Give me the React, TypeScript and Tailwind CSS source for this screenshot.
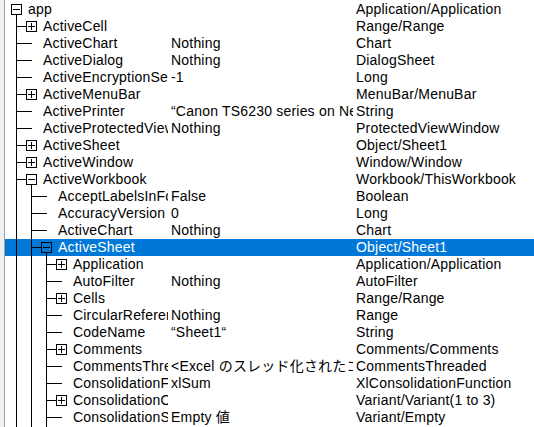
import React from "react";

type Row = {
  L: number;
  name: string;
  exp?: "+" | "-";
  val?: string;
  type: string;
  sel?: boolean;
};

const rows: Row[] = [
  { L: 0, name: "app", exp: "-", type: "Application/Application" },
  { L: 1, name: "ActiveCell", exp: "+", type: "Range/Range" },
  { L: 1, name: "ActiveChart", val: "Nothing", type: "Chart" },
  { L: 1, name: "ActiveDialog", val: "Nothing", type: "DialogSheet" },
  { L: 1, name: "ActiveEncryptionSession", val: "-1", type: "Long" },
  { L: 1, name: "ActiveMenuBar", exp: "+", type: "MenuBar/MenuBar" },
  { L: 1, name: "ActivePrinter", val: "“Canon TS6230 series on Ne01:“", type: "String" },
  { L: 1, name: "ActiveProtectedViewWindow", val: "Nothing", type: "ProtectedViewWindow" },
  { L: 1, name: "ActiveSheet", exp: "+", type: "Object/Sheet1" },
  { L: 1, name: "ActiveWindow", exp: "+", type: "Window/Window" },
  { L: 1, name: "ActiveWorkbook", exp: "-", type: "Workbook/ThisWorkbook" },
  { L: 2, name: "AcceptLabelsInFormulas", val: "False", type: "Boolean" },
  { L: 2, name: "AccuracyVersion", val: "0", type: "Long" },
  { L: 2, name: "ActiveChart", val: "Nothing", type: "Chart" },
  { L: 2, name: "ActiveSheet", exp: "-", type: "Object/Sheet1", sel: true },
  { L: 3, name: "Application", exp: "+", type: "Application/Application" },
  { L: 3, name: "AutoFilter", val: "Nothing", type: "AutoFilter" },
  { L: 3, name: "Cells", exp: "+", type: "Range/Range" },
  { L: 3, name: "CircularReference", val: "Nothing", type: "Range" },
  { L: 3, name: "CodeName", val: "“Sheet1“", type: "String" },
  { L: 3, name: "Comments", exp: "+", type: "Comments/Comments" },
  { L: 3, name: "CommentsThreaded", val: "<Excel のスレッド化されたコメント>", type: "CommentsThreaded" },
  { L: 3, name: "ConsolidationFunction", val: "xlSum", type: "XlConsolidationFunction" },
  { L: 3, name: "ConsolidationOptions", exp: "+", type: "Variant/Variant(1 to 3)" },
  { L: 3, name: "ConsolidationSources", val: "Empty 値", type: "Variant/Empty" },
  { L: 3, name: "CustomViews", exp: "+", type: "CustomViews/CustomViews" },
];

// which ancestor levels have a continuing vertical line for a row index
function continuing(i: number): number[] {
  const res: number[] = [];
  if (i >= 1) res.push(0);
  if (i >= 11) res.push(1);
  if (i >= 15) res.push(2);
  return res;
}

const cx = (L: number) => 16 + 15 * L;

function Tree({ row, i }: { row: Row; i: number }) {
  const w = 23 + 15 * row.L;
  const c = cx(row.L);
  const parent = row.L > 0 ? cx(row.L - 1) : 0;
  const lines: React.ReactNode[] = [];
  continuing(i).forEach((lv) => {
    lines.push(
      <line key={"v" + lv} x1={cx(lv) + 0.5} y1={0} x2={cx(lv) + 0.5} y2={17} stroke="#000" />
    );
  });
  if (row.L > 0) {
    const end = row.exp ? c - 5 : c + 1;
    lines.push(<line key="h" x1={parent} y1={8.5} x2={end} y2={8.5} stroke="#000" />);
  }
  if (row.exp) {
    lines.push(
      <rect key="b" x={c - 5 + 0.5} y={3.5} width={10} height={10} fill="none" stroke="#000" />
    );
    lines.push(<line key="m" x1={c - 3} y1={8.5} x2={c + 4} y2={8.5} stroke="#000" />);
    if (row.exp === "+") {
      lines.push(<line key="p" x1={c + 0.5} y1={5} x2={c + 0.5} y2={12} stroke="#000" />);
    } else {
      lines.push(<line key="d" x1={c + 0.5} y1={14} x2={c + 0.5} y2={17} stroke="#000" />);
    }
  }
  return (
    <svg
      width={w}
      height={17}
      viewBox={`5 0 ${w} 17`}
      shapeRendering="crispEdges"
      className="shrink-0 block"
    >
      {lines}
    </svg>
  );
}

export default function App() {
  return (
    <div
      className="w-[534px] h-[427px] overflow-hidden flex bg-white text-black text-[14px] tracking-[0.2px] leading-[17px]"
      style={{ fontFamily: '"Liberation Sans", "Noto Sans CJK JP", sans-serif' }}
    >
      <div className="w-[4px] shrink-0 bg-[#f0f0f0]" />
      <div className="w-px shrink-0 bg-[#a0a0a0]" />
      <div className="flex-1 flex flex-col pt-px overflow-hidden">
        {rows.map((r, i) => (
          <div
            key={i}
            className={
              "h-[17px] shrink-0 flex whitespace-nowrap " +
              (r.sel ? "bg-[#0078d7] text-white" : "")
            }
          >
            <div className="w-[163px] shrink-0 flex overflow-hidden">
              <Tree row={r} i={i} />
              <span>{r.name}</span>
            </div>
            <div className="w-[185px] shrink-0 overflow-hidden pl-[3px]">{r.val ?? ""}</div>
            <div className="flex-1 overflow-hidden pl-[3px]">{r.type}</div>
          </div>
        ))}
      </div>
    </div>
  );
}
